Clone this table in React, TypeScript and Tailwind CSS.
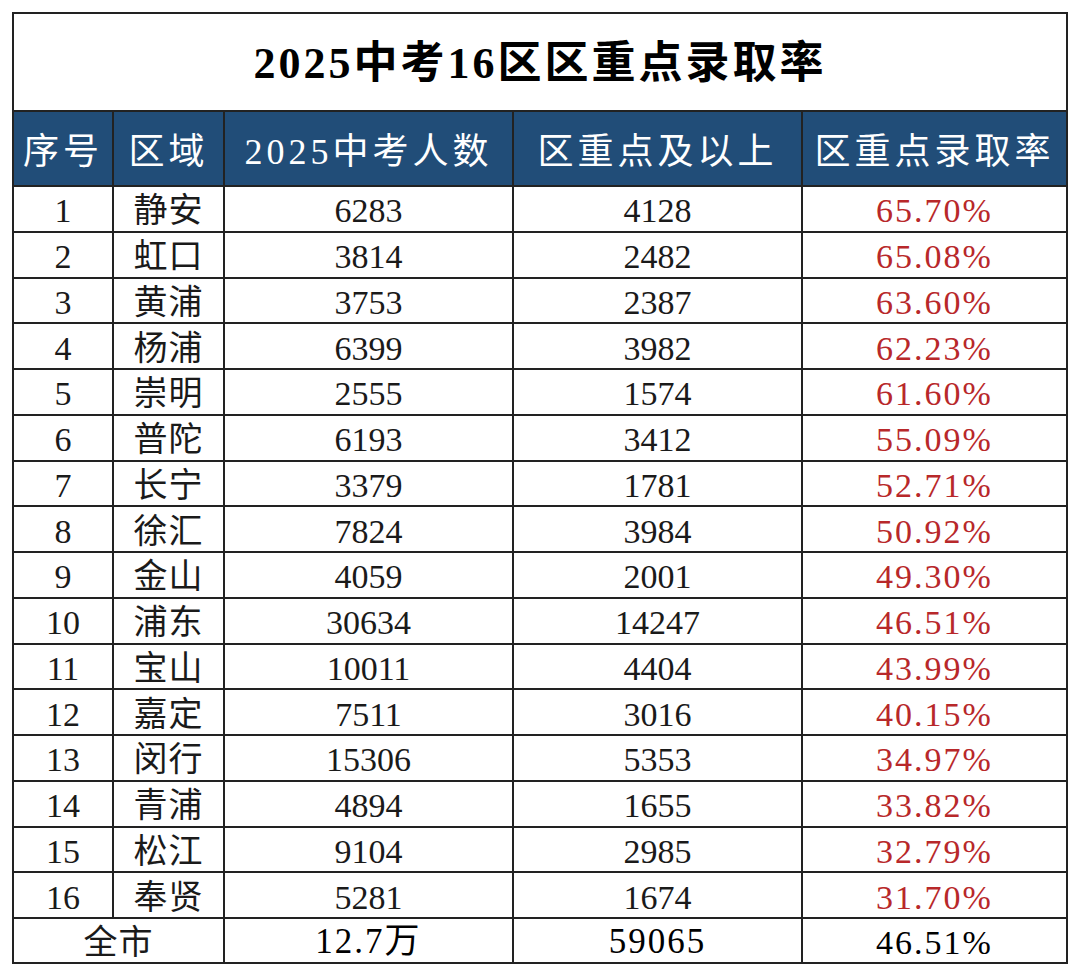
const rows = [
  { no: 1, area: "静安", total: "6283", key: "4128", rate: "65.70%" },
  { no: 2, area: "虹口", total: "3814", key: "2482", rate: "65.08%" },
  { no: 3, area: "黄浦", total: "3753", key: "2387", rate: "63.60%" },
  { no: 4, area: "杨浦", total: "6399", key: "3982", rate: "62.23%" },
  { no: 5, area: "崇明", total: "2555", key: "1574", rate: "61.60%" },
  { no: 6, area: "普陀", total: "6193", key: "3412", rate: "55.09%" },
  { no: 7, area: "长宁", total: "3379", key: "1781", rate: "52.71%" },
  { no: 8, area: "徐汇", total: "7824", key: "3984", rate: "50.92%" },
  { no: 9, area: "金山", total: "4059", key: "2001", rate: "49.30%" },
  { no: 10, area: "浦东", total: "30634", key: "14247", rate: "46.51%" },
  { no: 11, area: "宝山", total: "10011", key: "4404", rate: "43.99%" },
  { no: 12, area: "嘉定", total: "7511", key: "3016", rate: "40.15%" },
  { no: 13, area: "闵行", total: "15306", key: "5353", rate: "34.97%" },
  { no: 14, area: "青浦", total: "4894", key: "1655", rate: "33.82%" },
  { no: 15, area: "松江", total: "9104", key: "2985", rate: "32.79%" },
  { no: 16, area: "奉贤", total: "5281", key: "1674", rate: "31.70%" },
];

const headers = ["序号", "区域", "2025中考人数", "区重点及以上", "区重点录取率"];

const cell = "flex items-center justify-center border-r-2 border-b-2 border-[#222]";

export default function App() {
  return (
    <div className="min-h-screen bg-white pt-[12px] pl-[12px] font-['Liberation_Serif','Noto_Sans_CJK_SC',serif] text-[#1a1a1a]">
      <div className="grid w-[1056px] grid-cols-[100px_111px_289px_289px_265px] grid-rows-[98px_75px_repeat(16,45.75px)_45px] border-t-2 border-l-2 border-[#222]">
        {/* Title */}
        <div className={`${cell} col-span-5 pt-1 text-[44px] font-bold tracking-[3px] text-black`}>
          2025中考16区区重点录取率
        </div>

        {/* Header */}
        {headers.map((h) => (
          <div key={h} className={`${cell} bg-[#214d78] pt-[6px] text-[36px] tracking-[4px] text-white`}>
            {h}
          </div>
        ))}

        {/* Data rows */}
        {rows.map((r) => (
          <div key={r.no} className="contents text-[34px] leading-none">
            <div className={`${cell} pt-[5px]`}>{r.no}</div>
            <div className={`${cell} pt-[5px] tracking-[1px]`}>{r.area}</div>
            <div className={`${cell} pt-[5px]`}>{r.total}</div>
            <div className={`${cell} pt-[5px]`}>{r.key}</div>
            <div className={`${cell} pt-[5px] tracking-[2px] text-[#b8282a]`}>{r.rate}</div>
          </div>
        ))}

        {/* Total */}
        <div className={`${cell} col-span-2 pt-[3px] text-[34px] tracking-[1px]`}>全市</div>
        <div className={`${cell} pt-[3px] text-[35px] tracking-[2px] text-black`}>12.7万</div>
        <div className={`${cell} pt-[3px] text-[35px] tracking-[2px] text-black`}>59065</div>
        <div className={`${cell} pt-[3px] text-[34px] tracking-[2px] text-black`}>46.51%</div>
      </div>
    </div>
  );
}
